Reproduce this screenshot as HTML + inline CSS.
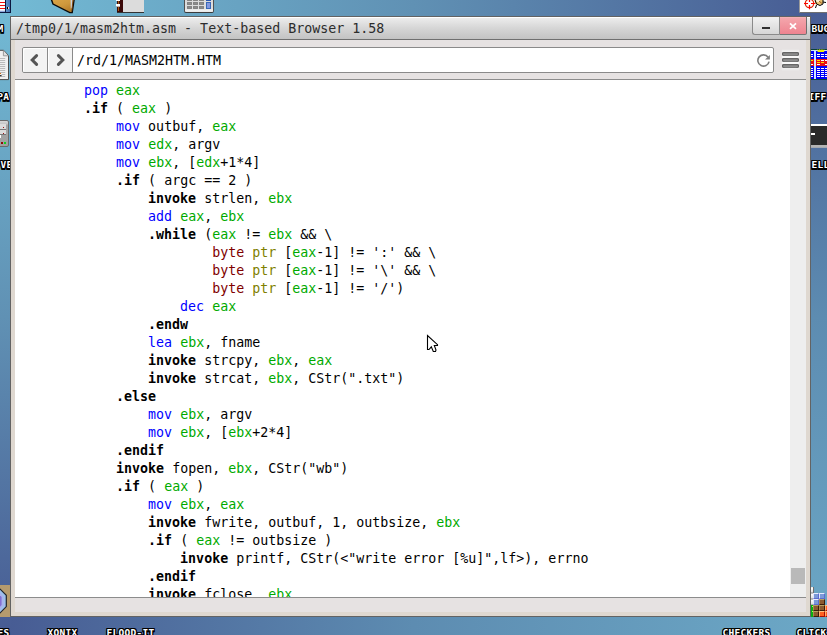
<!DOCTYPE html>
<html>
<head>
<meta charset="utf-8">
<title>Text-based Browser 1.58</title>
<style>
html,body{margin:0;padding:0;}
body{width:827px;height:635px;overflow:hidden;position:relative;background:#5f86b4;font-family:"DejaVu Sans Mono","Liberation Mono",monospace;}
.abs{position:absolute;}
/* desktop strips */
#bg-top{left:0;top:0;width:827px;height:17px;background:linear-gradient(to right,#73bbd5 0%,#6091b4 50%,#475b93 100%);}
#bg-bot{left:0;top:616px;width:827px;height:19px;background:linear-gradient(to right,#475b93 0%,#5d8cb1 50%,#6ca8c6 100%);}
#bg-left{left:0;top:0;width:11px;height:635px;background:linear-gradient(to bottom,#73bbd5 0%,#6091b4 50%,#475b93 100%);}
#bg-right{left:810px;top:0;width:17px;height:635px;background:linear-gradient(to bottom,#475b93 0%,#5d8cb1 50%,#6ca8c6 100%);}
/* window */
#win{left:10px;top:16px;width:801px;height:601px;background:#dfd8d0;box-sizing:border-box;border:1px solid #636363;}
#title{left:0;top:0;width:799px;height:22px;background:linear-gradient(to bottom,#ffffff 0px,#ffffff 1px,#ebebeb 1.5px,#d6d6d6 11px,#c3c3c3 22px);border-bottom:1px solid #707070;}
#title-text{left:5px;top:3px;font-size:13.3px;line-height:18px;color:#2c2c2c;white-space:pre;}
#btn-min{left:741px;top:0;width:27px;height:18px;box-sizing:border-box;border-left:1px solid #8a8a8a;border-bottom:1px solid #8a8a8a;border-bottom-left-radius:3px;background:linear-gradient(to bottom,#f2f2f2,#d6d6d6);}
#btn-min i{position:absolute;left:9px;top:10px;width:8px;height:2px;background:#303030;}
#btn-close{left:768px;top:0;width:28px;height:18px;box-sizing:border-box;border-left:1px solid #8a8a8a;border-bottom:1px solid #777;border-right:1px solid #6e6e6e;border-bottom-right-radius:2px;background:linear-gradient(to bottom,#f8bcc0 0,#f4a6ac 1px,#ee8490 17px);}
#client{left:4px;top:23px;width:791px;height:572px;background:#e6e2e2;}
.hb{left:767px;width:17px;height:4px;box-sizing:border-box;border-radius:2px;background:linear-gradient(to bottom,#555 0,#777 1px,#8e8e8e 2px,#8a8a8a 3px,#666 4px);box-shadow:inset 1px 0 0 #5a5a5a,inset -1px 0 0 #5a5a5a;}
#toolbar-line{left:0;top:39px;width:791px;height:1px;background:#8c8c8c;}
#navbox{left:7px;top:7px;width:752px;height:26px;box-sizing:border-box;border:1px solid #8a8a8a;border-radius:2px;background:#fff;}
#nav-back{left:0;top:0;width:24px;height:24px;background:#f3f3f3;box-shadow:inset 1px 1px 0 #fff;border-radius:2px 0 0 2px;border-right:1px solid #8a8a8a;}
#nav-fwd{left:25px;top:0;width:24px;height:24px;background:#f3f3f3;box-shadow:inset 1px 1px 0 #fff;border-right:1px solid #8a8a8a;}
#addr{left:54px;top:4px;font-size:13.3px;line-height:18px;color:#000;white-space:pre;}
#page{left:0;top:40px;width:775px;height:517px;background:#fff;overflow:hidden;}
#scroll{left:775px;top:40px;width:16px;height:517px;background:#eeeeee;}
#thumb{left:1px;top:488px;width:14px;height:16px;background:#b9b9b9;}
#status-line{left:0;top:557px;width:791px;height:1px;background:#8c8c8c;}
#code{left:5px;top:2px;margin:0;font-family:inherit;font-size:13.3px;line-height:18px;color:#000;white-space:pre;}
#code b{font-weight:bold;}
.k{color:#0000ff;}
.r{color:#00aa00;}
.t{color:#800000;}
.p{color:#808000;}
.cb{width:5px;height:3px;border-radius:1px;background:#8c8c8c;box-shadow:inset 0 0 0 0.6px #7a7a7a;}
.bk{width:6px;height:6px;box-sizing:border-box;}
.bl{background:#7c9ad8;border:1px solid #5c6cd0;border-top-color:#e8ecff;border-left-color:#e0e6ff;}
.br{background:#8a5a30;border:1px solid #3c1c08;border-top-color:#b8a060;border-left-color:#a88850;}
.or{background:#ff6020;border:1px solid #a80c00;border-top-color:#ffc080;border-left-color:#ffb070;}
/* desktop labels */
.lbl{font-family:"DejaVu Sans Mono","Liberation Mono",monospace;font-weight:bold;font-size:9.5px;line-height:12px;color:#fff;white-space:pre;letter-spacing:0.28px;text-shadow:1px 0 0 #000,-1px 0 0 #000,0 1px 0 #000,0 -1px 0 #000,1px 1px 0 #000,-1px -1px 0 #000,1px -1px 0 #000,-1px 1px 0 #000,0 2px 0 #000,1px 2px 0 #000,-1px 2px 0 #000;}
</style>
</head>
<body>
<div id="bg-top" class="abs"></div>
<div id="bg-bot" class="abs"></div>
<div id="bg-left" class="abs"></div>
<div id="bg-right" class="abs"></div>


<!-- desktop icons -->
<div id="desk">
<!-- top-left flag/book icon -->
<div class="abs" style="left:0;top:0;width:11px;height:13px;background:#0c1840;"></div>
<div class="abs" style="left:0;top:0;width:5px;height:12px;background:linear-gradient(to bottom,#fff 0,#fff 2px,#f01010 2px,#f01010 3.2px,#fff 3.2px,#fff 5px,#f01010 5px,#f01010 6.2px,#fff 6.2px,#fff 8px,#f01010 8px,#f01010 9.2px,#fff 9.2px,#fff 10px,#6c8cd0 12px);"></div>
<div class="abs" style="left:6px;top:0;width:4px;height:12px;background:linear-gradient(to right,#5f93c6,#4472b6);"></div>
<div class="abs" style="left:7px;top:7px;width:1px;height:2px;background:#000;"></div>
<div class="abs" style="left:8px;top:7px;width:1px;height:2px;background:#e8d8b8;"></div>
<!-- folder -->
<svg class="abs" style="left:48px;top:0" width="30" height="15" viewBox="48 0 30 15"><defs><linearGradient id="fg" x1="0" y1="0" x2="0.6" y2="1"><stop offset="0" stop-color="#dba648"/><stop offset="0.55" stop-color="#cf983c"/><stop offset="1" stop-color="#b47c2a"/></linearGradient></defs><path d="M51.2 -1 L53 4 L69.8 12.6 L72.2 12.6 L74.2 -1 Z" fill="url(#fg)" stroke="#0a0a0a" stroke-width="1.4"/><path d="M70.6 0 L72.4 0 L71.6 8 L70.8 8.6 Z" fill="#ccd4e0"/><path d="M72.6 0 L73.6 0 L72.2 11 L71.6 11 Z" fill="#7a4418"/></svg>
<!-- notebook -->
<div class="abs" style="left:117px;top:0;width:27px;height:13px;background:#333;"></div>
<div class="abs" style="left:117px;top:0;width:6px;height:12px;background:#3a0808;"></div>
<div class="abs" style="left:118.4px;top:0;width:0.9px;height:11px;background:#a85a14;"></div>
<div class="abs" style="left:123px;top:0;width:20.6px;height:12px;background:#dcdcdc;"></div>
<div class="abs" style="left:116px;top:4px;width:4px;height:2px;background:#fff;box-shadow:0 1px 0 #b8b0b0;"></div>
<div class="abs" style="left:116px;top:-1px;width:4px;height:1.6px;background:#fff;"></div>
<!-- calculator -->
<div class="abs" style="left:184px;top:-2px;width:30px;height:15px;box-sizing:border-box;border:1px solid #505050;border-bottom:1.4px solid #3c3c3c;border-radius:0 0 2px 2px;background:linear-gradient(to bottom,#dadada 0,#dedede 9px,#f4f4f4 12px,#d0d0d0 14px);"></div>
<div class="cb abs" style="left:187px;top:-2px;"></div><div class="cb abs" style="left:193px;top:-2px;"></div><div class="cb abs" style="left:199px;top:-2px;"></div>
<div class="cb abs" style="left:187px;top:2px;"></div><div class="cb abs" style="left:193px;top:2px;"></div><div class="cb abs" style="left:199px;top:2px;"></div>
<div class="cb abs" style="left:187px;top:6px;"></div><div class="cb abs" style="left:193px;top:6px;"></div><div class="cb abs" style="left:199px;top:6px;"></div>
<div class="abs" style="left:206px;top:-2px;width:5px;height:3px;background:#2c58b0;"></div>
<div class="abs" style="left:206px;top:2px;width:5px;height:7px;box-sizing:border-box;border:1px solid #3868b8;border-width:0.6px 0.4px 0.8px 0.4px;background:#8298e0;"></div>
<!-- top-right bug icon -->
<div class="abs" style="left:799px;top:-1px;width:30px;height:14px;box-sizing:border-box;background:#fff;border-left:1px solid #9a9a9a;border-bottom:1px solid #707070;"></div>
<svg class="abs" style="left:800px;top:0" width="27" height="12" viewBox="800 0 27 12"><circle cx="809.5" cy="3.5" r="4.2" fill="none" stroke="#e02808" stroke-width="1.3"/><path d="M804 3.5 H808 M811 3.5 H815.5 M809.5 -2 V2 M809.5 5 V9.2" stroke="#ff0000" stroke-width="1.2"/><ellipse cx="819" cy="1.5" rx="4.2" ry="3.6" fill="#e8c070"/><ellipse cx="818" cy="0.6" rx="2" ry="1.6" fill="#f8ecd0"/><path d="M815 0 L816.5 4 L820 5.5 L823 4 L823 0 M816.5 5 L815.5 8 M823 2 L826 2.5" stroke="#000" stroke-width="1" fill="none"/><path d="M819 1 L822 3.5" stroke="#a06020" stroke-width="1"/></svg>
<!-- right: table icon -->
<div class="abs" style="left:811px;top:49px;width:16px;height:31px;background:#0a4038;"></div>
<div class="abs" style="left:811px;top:50px;width:16px;height:29px;background:linear-gradient(to bottom,#0000f8 0,#0000f8 9px,#e81010 9px,#e81010 16px,#0000f8 16px);"></div>
<div class="abs" style="left:814px;top:50px;width:2px;height:29px;background:#cfe4ff;"></div>
<div class="abs" style="left:811px;top:50px;width:16px;height:1px;background:#cfe4ff;"></div>
<svg class="abs" style="left:811px;top:49px" width="16" height="31" viewBox="811 49 16 31"><path d="M817.6 49 l1.1 1.6 l1.1 -1.6 l1.1 1.6 l1.1 -1.6 l1.1 1.6 l1.1 -1.6 v3 h-6.6 Z" fill="#f0f000"/><g stroke="#fff" stroke-width="1"><path d="M811 54.5 h2 M817 54.5 h3 M821 54.5 h3 M825 54.5 h2 M811 56.5 h2 M817 56.5 h3 M821 56.5 h3 M825 56.5 h2 M811 64.5 h2 M817 64.5 h3 M825 64.5 h2 M821 60.5 h3 M825 60.5 h2 M811 68.5 h2 M817 68.5 h3 M821 68.5 h3 M825 68.5 h2 M811 70.5 h2 M817 70.5 h3 M821 70.5 h3 M825 70.5 h2 M811 72.5 h2 M817 72.5 h3 M821 72.5 h3 M825 72.5 h2 M811 74.5 h2 M817 74.5 h3 M821 74.5 h3 M825 74.5 h2 M811 76.5 h2 M817 76.5 h3 M821 76.5 h3 M825 76.5 h2"/></g><g stroke="#f8e000" stroke-width="1"><path d="M811 60.5 h2 M817 60.5 h3 M817 62.5 h3 M821 62.5 h3"/></g></svg>
<!-- right: terminal icon -->
<div class="abs" style="left:811px;top:124px;width:16px;height:24px;background:linear-gradient(to bottom,#fff 0,#fff 2px,#2a2a2a 2px,#2a2a2a 21px,#b4b4b4 21px,#b4b4b4 23.4px,#5070a8 24px);"></div>
<div class="abs" style="left:811px;top:133px;width:4px;height:1.6px;background:#fff;"></div>
<!-- left: document icon -->
<svg class="abs" style="left:0;top:48px" width="11" height="34" viewBox="0 48 11 34"><path d="M-1 50.3 H3.6 L8.5 55.6 V79.6 H-1 Z" fill="#f0f0f0" stroke="#4a4a4a" stroke-width="1"/><path d="M3.4 50.6 V55.8 H8.3" fill="#e0e0e0" stroke="#888" stroke-width="0.8"/><g stroke="#b4b4b4" stroke-width="0.9"><path d="M0 58.5 h5.2 M0 60.5 h5.2 M0 62.5 h5.2 M0 64.5 h5.2 M0 66.5 h5.2 M0 68.5 h5.2 M0 70.5 h5.2 M0 72.5 h5.2 M1.5 74.5 h3.7 M1.5 76.5 h3.7"/></g><path d="M0 73.5 h1" stroke="#e07010" stroke-width="1"/><path d="M0 75.8 h1.6" stroke="#333" stroke-width="1.4"/></svg>
<!-- left: server icon -->
<div class="abs" style="left:-2px;top:119.5px;width:10.5px;height:27px;box-sizing:border-box;border:1px solid #6a6a6a;border-radius:2px;background:linear-gradient(to bottom,#d8d8d8 0,#c4c4c4 3px,#a6a6a6 4px,#a0a0a0 100%);"></div>
<div class="abs" style="left:0;top:124px;width:5.5px;height:4.6px;background:#dcdcdc;border-bottom:1px solid #777;"></div>
<div class="abs" style="left:0;top:130px;width:5.5px;height:4.2px;background:#dcdcdc;border-bottom:1px solid #777;"></div>
<div class="abs" style="left:0;top:135.4px;width:1px;height:3px;background:#fff;"></div>
<div class="abs" style="left:3px;top:127px;width:1px;height:1.4px;background:#a01010;"></div>
<div class="abs" style="left:3px;top:132.6px;width:1px;height:1.4px;background:#a01010;"></div>
<div class="abs" style="left:1px;top:141.6px;width:2px;height:2px;background:#900808;"></div>
<div class="abs" style="left:4.2px;top:141.6px;width:2px;height:2px;background:#10d020;"></div>
<!-- left-bottom: hexagon icon -->
<div class="abs" style="left:0;top:585px;width:10px;height:32px;background:#b59b6e;"></div>
<svg class="abs" style="left:0;top:585px" width="10" height="32" viewBox="0 585 10 32"><path d="M-6 589 H0 L6.3 595.3 V606.6 L0 613 H-6 Z" fill="#9cc0ec" stroke="#20242c" stroke-width="1.2"/><path d="M-6 592 H-0.6 L3.8 596.4 V605.6 L-0.6 610 H-6 Z" fill="#a8b4ec"/><path d="M-6 594 H-1.2 L1.6 597 V605 L-1.2 608 H-6 Z" fill="#8470d4"/></svg>
<!-- right-bottom: blocks -->
<div class="abs" style="left:811px;top:587px;width:2px;height:18px;background:linear-gradient(to bottom,#d8d8d8 0,#fff 1px,#e0e0e0 5px,#808080 6px,#fff 7px,#e0e0e0 11px,#808080 12px,#fff 13px,#e0e0e0 17px,#808080 18px);border-right:0.6px solid #707070;"></div>
<div class="abs" style="left:811px;top:605px;width:2px;height:12px;background:#08b010;"></div>
<div class="abs" style="left:811.6px;top:606px;width:0.8px;height:1px;background:#b0ff60;"></div>
<div class="abs" style="left:811.6px;top:611.4px;width:0.8px;height:1px;background:#b0ff60;"></div>
<div class="bk bl abs" style="left:813px;top:593px;"></div><div class="bk bl abs" style="left:819px;top:593px;"></div>
<div class="bk bl abs" style="left:813px;top:599px;"></div><div class="bk br abs" style="left:819px;top:599px;"></div>
<div class="bk br abs" style="left:813px;top:605px;"></div><div class="bk br abs" style="left:819px;top:605px;"></div><div class="bk or abs" style="left:825px;top:605px;"></div>
<div class="bk br abs" style="left:813px;top:611px;"></div><div class="bk or abs" style="left:819px;top:611px;"></div><div class="bk or abs" style="left:825px;top:611px;"></div>
<!-- labels -->
<div class="lbl abs" style="left:811.5px;top:23px;">BUG</div>
<div class="lbl abs" style="left:808.5px;top:91px;">IFF</div>
<div class="lbl abs" style="left:811.5px;top:159px;">ELL</div>
<div class="lbl abs" style="left:-2.4px;top:23px;">M</div>
<div class="lbl abs" style="left:-2.8px;top:91px;">PA</div>
<div class="lbl abs" style="left:0.4px;top:159px;">VE</div>
<div class="lbl abs" style="left:-2.5px;top:627px;">ES</div>
<div class="lbl abs" style="left:47.5px;top:627px;">XONIX</div>
<div class="lbl abs" style="left:106.5px;top:627px;">FLOOD-IT</div>
<div class="lbl abs" style="left:722.5px;top:627px;">CHECKERS</div>
<div class="lbl abs" style="left:796.5px;top:627px;">CLICK</div>
</div>

<div id="win" class="abs">
  <div id="title" class="abs"></div>
  <div id="title-text" class="abs">/tmp0/1/masm2htm.asm - Text-based Browser 1.58</div>
  <div id="btn-min" class="abs"><i></i></div>
  <div id="btn-close" class="abs">
    <svg class="abs" style="left:8px;top:4px" width="10" height="10" viewBox="0 0 10 10"><path d="M2 2.3 L8 7.9 M8 2.3 L2 7.9" stroke="#fff" stroke-width="1.7" fill="none"/></svg>
  </div>
  <div id="client" class="abs">
    <div id="navbox" class="abs">
      <div id="nav-back" class="abs"><svg class="abs" style="left:0;top:0" width="24" height="24" viewBox="0 0 24 24"><path d="M13.6 7.6 L9.2 12 L13.6 16.4" stroke="#555" stroke-width="3" fill="none" stroke-linecap="round" stroke-linejoin="miter"/></svg></div>
      <div id="nav-fwd" class="abs"><svg class="abs" style="left:0;top:0" width="24" height="24" viewBox="0 0 24 24"><path d="M10.4 7.6 L14.8 12 L10.4 16.4" stroke="#555" stroke-width="3" fill="none" stroke-linecap="round" stroke-linejoin="miter"/></svg></div>
      <div id="addr" class="abs">/rd/1/MASM2HTM.HTM</div>
      <svg class="abs" style="left:731px;top:4px" width="18" height="18" viewBox="0 0 18 18"><path d="M14.1 5.2 A5.65 5.65 0 1 0 15.05 9.6" stroke="#7e7e7e" stroke-width="1.6" fill="none"/><path d="M15.9 3 L15.9 7.6 L11 7.6 Z" fill="#808080"/></svg>
    </div>
    <div class="abs" style="left:767px;top:10px;width:17px;height:20px;background:linear-gradient(to bottom,#ecebeb 0,#f8f8f8 3px,#f8f8f8 16px,#e9e8e8 20px);box-shadow:0 0 1px #f0efef;"></div>
    <div class="hb abs" style="top:12px;"></div>
    <div class="hb abs" style="top:18px;"></div>
    <div class="hb abs" style="top:24px;"></div>
    <div id="toolbar-line" class="abs"></div>
    <div id="page" class="abs">
<pre id="code" class="abs">        <span class="k">pop</span> <span class="r">eax</span>
        <b>.if</b> ( <span class="r">eax</span> )
            <span class="k">mov</span> outbuf, <span class="r">eax</span>
            <span class="k">mov</span> <span class="r">edx</span>, argv
            <span class="k">mov</span> <span class="r">ebx</span>, [<span class="r">edx</span>+1*4]
            <b>.if</b> ( argc == 2 )
                <b>invoke</b> strlen, <span class="r">ebx</span>
                <span class="k">add</span> <span class="r">eax</span>, <span class="r">ebx</span>
                <b>.while</b> (<span class="r">eax</span> != <span class="r">ebx</span> &amp;&amp; \
                        <span class="t">byte</span> <span class="p">ptr</span> [<span class="r">eax</span>-1] != ':' &amp;&amp; \
                        <span class="t">byte</span> <span class="p">ptr</span> [<span class="r">eax</span>-1] != '\' &amp;&amp; \
                        <span class="t">byte</span> <span class="p">ptr</span> [<span class="r">eax</span>-1] != '/')
                    <span class="k">dec</span> <span class="r">eax</span>
                <b>.endw</b>
                <span class="k">lea</span> <span class="r">ebx</span>, fname
                <b>invoke</b> strcpy, <span class="r">ebx</span>, <span class="r">eax</span>
                <b>invoke</b> strcat, <span class="r">ebx</span>, CStr(".txt")
            <b>.else</b>
                <span class="k">mov</span> <span class="r">ebx</span>, argv
                <span class="k">mov</span> <span class="r">ebx</span>, [<span class="r">ebx</span>+2*4]
            <b>.endif</b>
            <b>invoke</b> fopen, <span class="r">ebx</span>, CStr("wb")
            <b>.if</b> ( <span class="r">eax</span> )
                <span class="k">mov</span> <span class="r">ebx</span>, <span class="r">eax</span>
                <b>invoke</b> fwrite, outbuf, 1, outbsize, <span class="r">ebx</span>
                <b>.if</b> ( <span class="r">eax</span> != outbsize )
                    <b>invoke</b> printf, CStr(&lt;"write error [%u]",lf&gt;), errno
                <b>.endif</b>
                <b>invoke</b> fclose, <span class="r">ebx</span>
                <b>.endif</b></pre>
    </div>
    <div id="scroll" class="abs"><div id="thumb" class="abs"></div></div>
    <div id="status-line" class="abs"></div>
  </div>
</div>

<!-- mouse cursor -->
<svg class="abs" style="left:420px;top:330px" width="24" height="26" viewBox="420 330 24 26"><path d="M427.5 335.5 L427.5 349.5 L429 349.5 L431.3 346.8 L433.3 351.5 L435.5 351.5 L436 350 L434.3 345.5 L437.5 345.5 L437.5 344.7 Z" fill="#fff" stroke="#000" stroke-width="1.1" stroke-linejoin="miter"/></svg>

</body>
</html>
